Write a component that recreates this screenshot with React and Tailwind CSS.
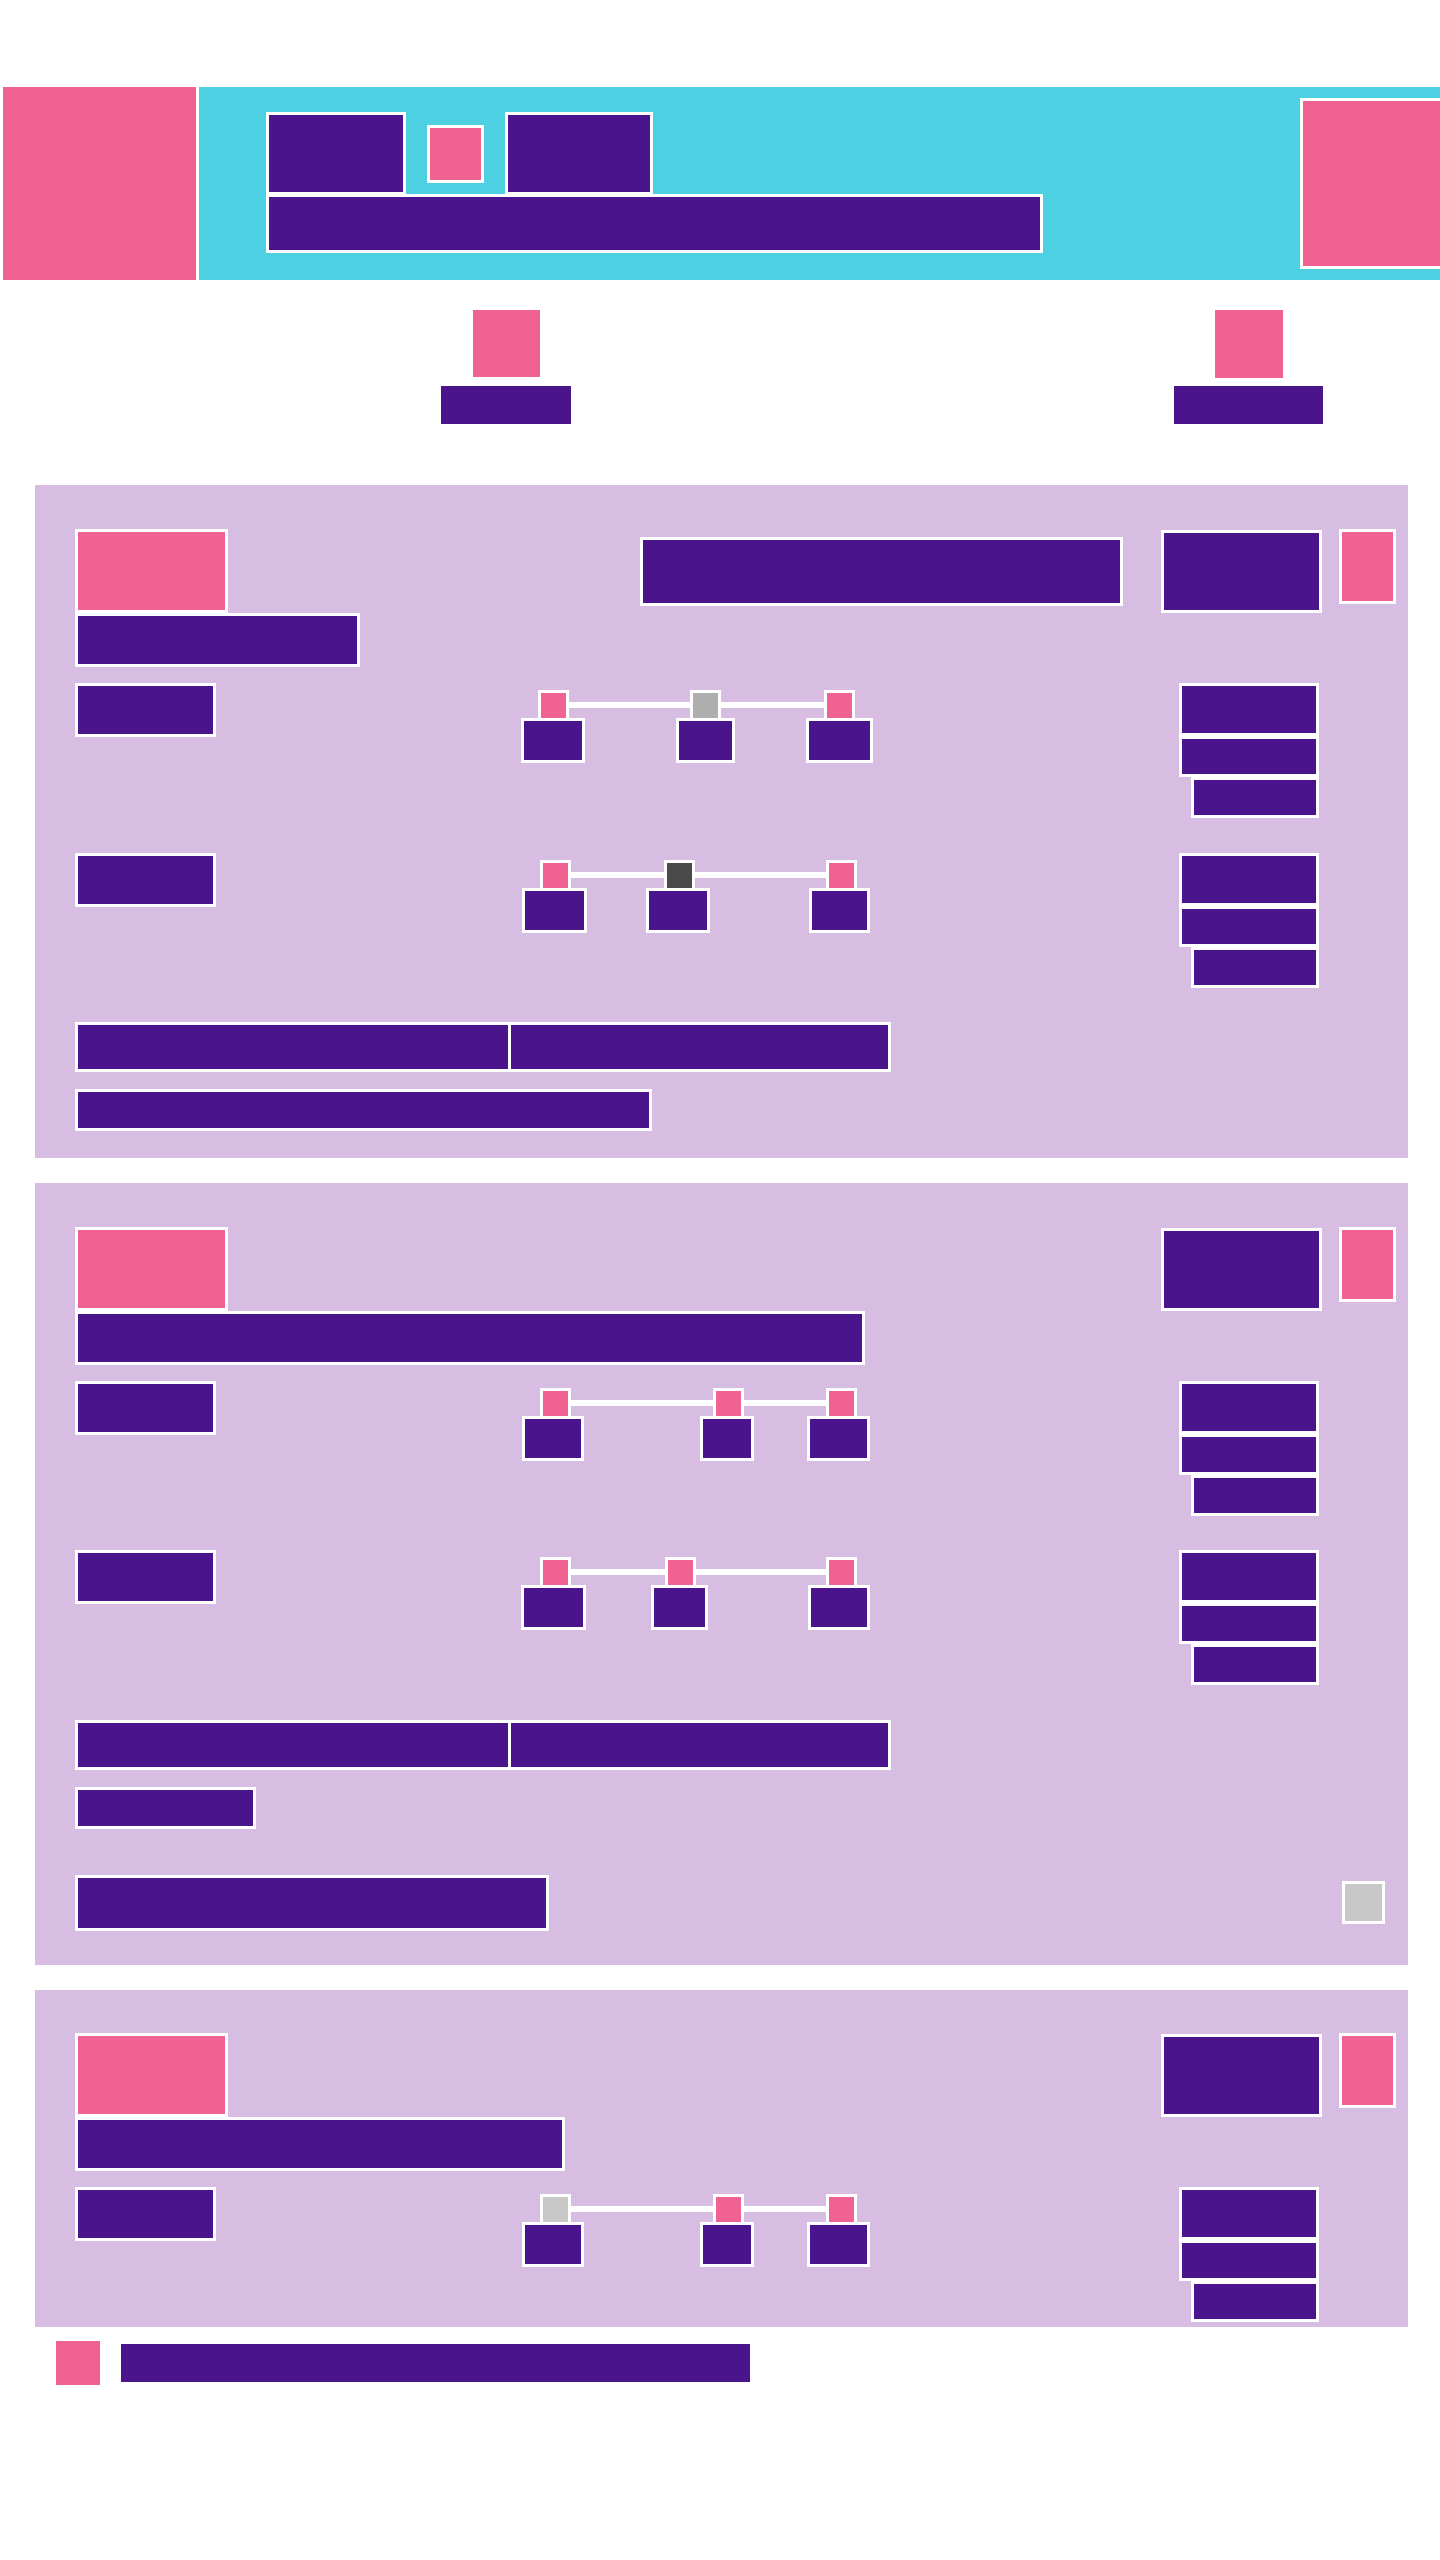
import clsx from 'clsx'

const PINK = 'bg-[#f06292]'
const PURPLE = 'bg-[#4a148c]'

function Block({ className }) {
  return <div className={clsx('shrink-0 border-[3px] border-white bg-[#4a148c]', className)} />
}

const dotColors = {
  pink: 'bg-[#f06292]',
  gray: 'bg-[#aeaeae]',
  dark: 'bg-[#4a4a4a]',
  light: 'bg-[#c8c8c8]',
}

function Slider({ stops }) {
  const first = stops[0]
  const last = stops[stops.length - 1]

  return (
    <div className="relative mt-[7px] ml-[305px] h-[73px] w-[352px] shrink-0">
      <div
        className="absolute top-[12px] h-[6px] bg-white"
        style={{ left: first.x + 31, width: last.x - first.x - 31 }}
      />
      {stops.map((stop, i) => (
        <div key={i}>
          <div
            className={clsx(
              'absolute top-0 h-[28px] w-[31px] border-x-[3px] border-t-[3px] border-white',
              dotColors[stop.dot]
            )}
            style={{ left: stop.x }}
          />
          <div
            className="absolute top-[28px] h-[45px] border-[3px] border-white bg-[#4a148c]"
            style={{ left: stop.lx, width: stop.lw }}
          />
        </div>
      ))}
    </div>
  )
}

function Row({ stops }) {
  return (
    <div className="flex items-start">
      <Block className="h-[54px] w-[141px]" />
      <Slider stops={stops} />
      <div className="mr-[77px] ml-auto flex flex-col items-end">
        <Block className="h-[53px] w-[140px]" />
        <Block className="h-[41px] w-[140px]" />
        <Block className="h-[41px] w-[128px]" />
      </div>
    </div>
  )
}

function CardHeader({ titleWidth, center }) {
  return (
    <div className="flex flex-col">
      <div className="flex h-[84px] items-start">
        <div className="h-[84px] w-[153px] shrink-0 border-[3px] border-white bg-[#f06292]" />
        {center && <Block className="mt-[8px] ml-auto h-[69px] w-[483px]" />}
        <Block className={clsx('mt-[1px] h-[83px] w-[161px]', center ? 'ml-[38px]' : 'ml-auto')} />
        <div className="ml-[17px] h-[75px] w-[57px] shrink-0 border-[3px] border-white bg-[#f06292]" />
      </div>
      <Block className={clsx('h-[54px]', titleWidth)} />
    </div>
  )
}

function Bars() {
  return (
    <div className="flex">
      <Block className="h-[50px] w-[433px] border-r-0" />
      <Block className="h-[50px] w-[383px]" />
    </div>
  )
}

export default function App() {
  return (
    <div className="min-h-[2560px] bg-white pt-[87px] font-['Liberation_Sans',sans-serif]">
      {/* header band */}
      <div className="flex h-[193px] overflow-hidden">
        <div className={clsx('ml-[3px] w-[193px] shrink-0', PINK)} />
        <div className="ml-[3px] flex flex-1 bg-[#4dd0e1]">
          <div className="flex flex-1 flex-col pt-[25px] pl-[67px]">
            <div className="flex items-center">
              <Block className="h-[83px] w-[140px]" />
              <div className="ml-[21px] h-[58px] w-[57px] border-[3px] border-white bg-[#f06292]" />
              <Block className="ml-[21px] h-[83px] w-[148px]" />
            </div>
            <Block className="-mt-[1px] h-[59px] w-[777px]" />
          </div>
          <div className="mt-[11px] -mr-[6px] h-[171px] w-[146px] shrink-0 border-[3px] border-white bg-[#f06292]" />
        </div>
      </div>

      {/* two stat tiles */}
      <div className="flex pt-[30px] pb-[61px]">
        <div className="ml-[441px] flex w-[130px] flex-col items-center">
          <div className={clsx('h-[67px] w-[67px]', PINK)} />
          <div className={clsx('mt-[9px] h-[38px] w-[130px]', PURPLE)} />
        </div>
        <div className="ml-[603px] flex w-[149px] flex-col items-center">
          <div className={clsx('h-[68px] w-[68px]', PINK)} />
          <div className={clsx('mt-[8px] h-[38px] w-[149px]', PURPLE)} />
        </div>
      </div>

      {/* card 1 */}
      <div className="ml-[35px] flex w-[1373px] flex-col bg-[#d7bde2] pt-[44px] pr-[12px] pb-[27px] pl-[40px]">
        <CardHeader titleWidth="w-[285px]" center />
        <div className="mt-[16px] flex flex-col gap-[35px]">
          <Row
            stops={[
              { dot: 'pink', x: 17, lx: 0, lw: 64 },
              { dot: 'gray', x: 169, lx: 155, lw: 59 },
              { dot: 'pink', x: 303, lx: 285, lw: 67 },
            ]}
          />
          <Row
            stops={[
              { dot: 'pink', x: 19, lx: 1, lw: 65 },
              { dot: 'dark', x: 143, lx: 125, lw: 64 },
              { dot: 'pink', x: 305, lx: 288, lw: 61 },
            ]}
          />
        </div>
        <div className="mt-[34px]">
          <Bars />
        </div>
        <Block className="mt-[17px] h-[42px] w-[577px]" />
      </div>

      {/* card 2 */}
      <div className="mt-[25px] ml-[35px] flex w-[1373px] flex-col bg-[#d7bde2] pt-[44px] pr-[12px] pb-[34px] pl-[40px]">
        <CardHeader titleWidth="w-[790px]" />
        <div className="mt-[16px] flex flex-col gap-[34px]">
          <Row
            stops={[
              { dot: 'pink', x: 19, lx: 1, lw: 62 },
              { dot: 'pink', x: 192, lx: 179, lw: 54 },
              { dot: 'pink', x: 305, lx: 286, lw: 63 },
            ]}
          />
          <Row
            stops={[
              { dot: 'pink', x: 19, lx: 0, lw: 65 },
              { dot: 'pink', x: 144, lx: 130, lw: 57 },
              { dot: 'pink', x: 305, lx: 287, lw: 62 },
            ]}
          />
        </div>
        <div className="mt-[35px]">
          <Bars />
        </div>
        <Block className="mt-[17px] h-[42px] w-[181px]" />
        <div className="mt-[46px] flex items-start">
          <Block className="h-[56px] w-[474px]" />
          <div className="mt-[6px] mr-[11px] ml-auto h-[43px] w-[43px] border-[3px] border-white bg-[#c8c8c8]" />
        </div>
      </div>

      {/* card 3 */}
      <div className="mt-[25px] ml-[35px] flex w-[1373px] flex-col bg-[#d7bde2] pt-[43px] pr-[12px] pb-[5px] pl-[40px]">
        <CardHeader titleWidth="w-[490px]" />
        <div className="mt-[16px]">
          <Row
            stops={[
              { dot: 'light', x: 19, lx: 1, lw: 62 },
              { dot: 'pink', x: 192, lx: 179, lw: 54 },
              { dot: 'pink', x: 305, lx: 286, lw: 63 },
            ]}
          />
        </div>
      </div>

      {/* footer */}
      <div className="mt-[14px] flex items-center">
        <div className={clsx('ml-[56px] h-[44px] w-[44px]', PINK)} />
        <div className={clsx('ml-[21px] h-[38px] w-[629px]', PURPLE)} />
      </div>
    </div>
  )
}
